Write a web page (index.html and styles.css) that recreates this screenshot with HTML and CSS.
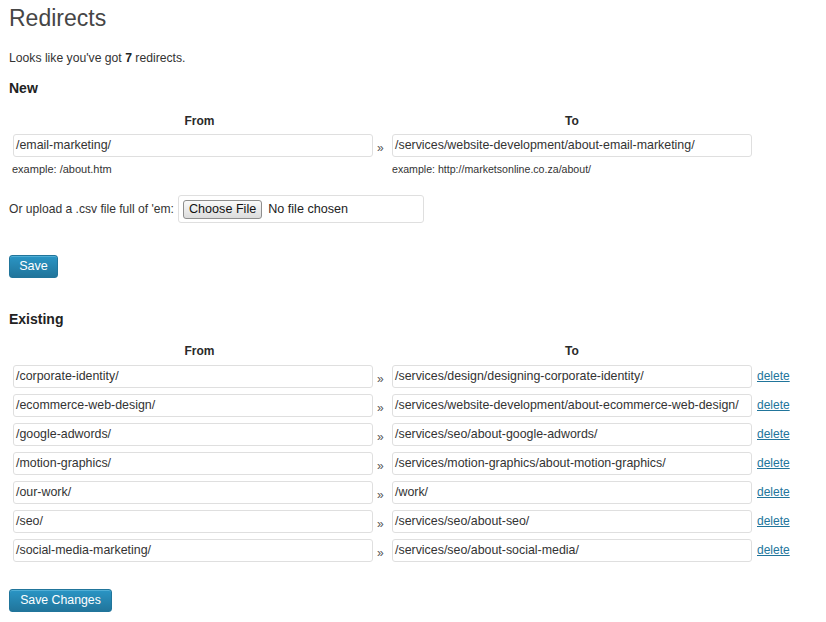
FILE: index.html
```html
<!DOCTYPE html>
<html>
<head>
<meta charset="utf-8">
<title>Redirects</title>
<link rel="stylesheet" href="styles.css">
</head>
<body>
<div class="wrap">
  <h2 class="title">Redirects</h2>
  <p class="intro">Looks like you've got <b>7</b> redirects.</p>

  <h3 class="section">New</h3>
  <div class="grid grid-new">
    <div class="th th-from">From</div>
    <div class="th-gap"></div>
    <div class="th th-to">To</div>
    <div></div>

    <div class="field">/email-marketing/</div>
    <div class="arrow">»</div>
    <div class="field">/services/website-development/about-email-marketing/</div>
    <div></div>

    <div class="example ex-from">example: /about.htm</div>
    <div></div>
    <div class="example ex-to">example: http://marketsonline.co.za/about/</div>
    <div></div>
  </div>

  <div class="upload">
    <span class="upload-label">Or upload a .csv file full of 'em:</span>
    <span class="filebox"><span class="filebtn">Choose File</span><span class="filetext">No file chosen</span></span>
  </div>

  <div class="btn btn-save">Save</div>

  <h3 class="section section-existing">Existing</h3>
  <div class="grid grid-existing">
    <div class="th th-from">From</div>
    <div class="th-gap"></div>
    <div class="th th-to">To</div>
    <div></div>

    <div class="field">/corporate-identity/</div>
    <div class="arrow">»</div>
    <div class="field">/services/design/designing-corporate-identity/</div>
    <a class="del" href="#">delete</a>

    <div class="field">/ecommerce-web-design/</div>
    <div class="arrow">»</div>
    <div class="field">/services/website-development/about-ecommerce-web-design/</div>
    <a class="del" href="#">delete</a>

    <div class="field">/google-adwords/</div>
    <div class="arrow">»</div>
    <div class="field">/services/seo/about-google-adwords/</div>
    <a class="del" href="#">delete</a>

    <div class="field">/motion-graphics/</div>
    <div class="arrow">»</div>
    <div class="field">/services/motion-graphics/about-motion-graphics/</div>
    <a class="del" href="#">delete</a>

    <div class="field">/our-work/</div>
    <div class="arrow">»</div>
    <div class="field">/work/</div>
    <a class="del" href="#">delete</a>

    <div class="field">/seo/</div>
    <div class="arrow">»</div>
    <div class="field">/services/seo/about-seo/</div>
    <a class="del" href="#">delete</a>

    <div class="field">/social-media-marketing/</div>
    <div class="arrow">»</div>
    <div class="field">/services/seo/about-social-media/</div>
    <a class="del" href="#">delete</a>
  </div>

  <div class="btn btn-changes">Save Changes</div>
</div>
</body>
</html>
```

FILE: styles.css
```css
html, body {
  margin: 0;
  padding: 0;
  background: #ffffff;
}

body {
  font-family: "Liberation Sans", Arial, sans-serif;
  font-size: 12.2px;
  color: #333333;
}

.wrap {
  padding: 0 9px;
}

.title {
  margin: 0;
  padding-top: 4px;
  font-size: 23px;
  line-height: 29px;
  font-weight: normal;
  color: #464646;
}

.intro {
  margin: 16px 0 0;
  line-height: 18px;
}

.intro b {
  color: #222;
}

.section {
  margin: 12px 0 0;
  font-size: 14px;
  line-height: 18px;
  font-weight: bold;
  color: #222222;
}

.section-existing {
  margin-top: 32px;
}

.grid {
  display: grid;
  grid-template-columns: 360px 19px 360px auto;
  margin-left: 4px;
  align-items: center;
}

.grid-new {
  margin-top: 16px;
}

.grid-existing {
  margin-top: 15px;
  row-gap: 6px;
}

.th {
  font-size: 12px;
  line-height: 16px;
  font-weight: bold;
  color: #2a2a2a;
  text-align: center;
}

.grid-new .th {
  margin-bottom: 5px;
}

.th-from {
  padding-left: 13px;
}

.field {
  box-sizing: border-box;
  height: 23px;
  line-height: 21px;
  border: 1px solid #dfdfdf;
  border-radius: 3px;
  padding: 0 2px;
  background: #ffffff;
  color: #333333;
  font-size: 12.4px;
  white-space: nowrap;
  overflow: hidden;
}

.arrow {
  height: 23px;
  line-height: 23px;
  padding-top: 3px;
  box-sizing: border-box;
  padding-left: 4px;
  color: #555555;
  font-size: 12px;
}

.example {
  margin-top: 5px;
  font-size: 11px;
  line-height: 14px;
  color: #333333;
}

.ex-from {
  margin-left: -1px;
}

.ex-to {
  font-size: 10.6px;
}

.del {
  margin-left: 5px;
  line-height: 23px;
  font-size: 12px;
  color: #21759b;
  text-decoration: underline;
}

.upload {
  display: flex;
  align-items: center;
  margin-top: 19px;
}

.upload-label {
  line-height: 18px;
  margin-right: 4px;
  font-size: 12.1px;
}

.filebox {
  box-sizing: border-box;
  width: 246px;
  height: 28px;
  border: 1px solid #dfdfdf;
  border-radius: 3px;
  display: flex;
  align-items: center;
  padding-left: 4px;
}

.filebtn {
  box-sizing: border-box;
  height: 19px;
  line-height: 17px;
  padding: 0 5px;
  border: 1px solid #8e8e8e;
  border-radius: 3px;
  background: linear-gradient(#fafafa, #dcdcdc);
  color: #111111;
  font-size: 12.6px;
}

.filetext {
  margin-left: 6px;
  color: #222222;
  font-size: 12.6px;
}

.btn {
  box-sizing: border-box;
  height: 23px;
  line-height: 21px;
  border: 1px solid #21759b;
  border-radius: 3px;
  background: linear-gradient(#2a95c5, #21759b);
  color: #ffffff;
  box-shadow: inset 0 1px 0 rgba(120, 200, 230, 0.5);
  display: block;
  text-align: center;
  padding: 0;
}

.btn-save {
  width: 49px;
  margin-top: 32px;
  font-size: 12.6px;
}

.btn-changes {
  width: 103px;
  margin-top: 27px;
  font-size: 12.3px;
}
```
